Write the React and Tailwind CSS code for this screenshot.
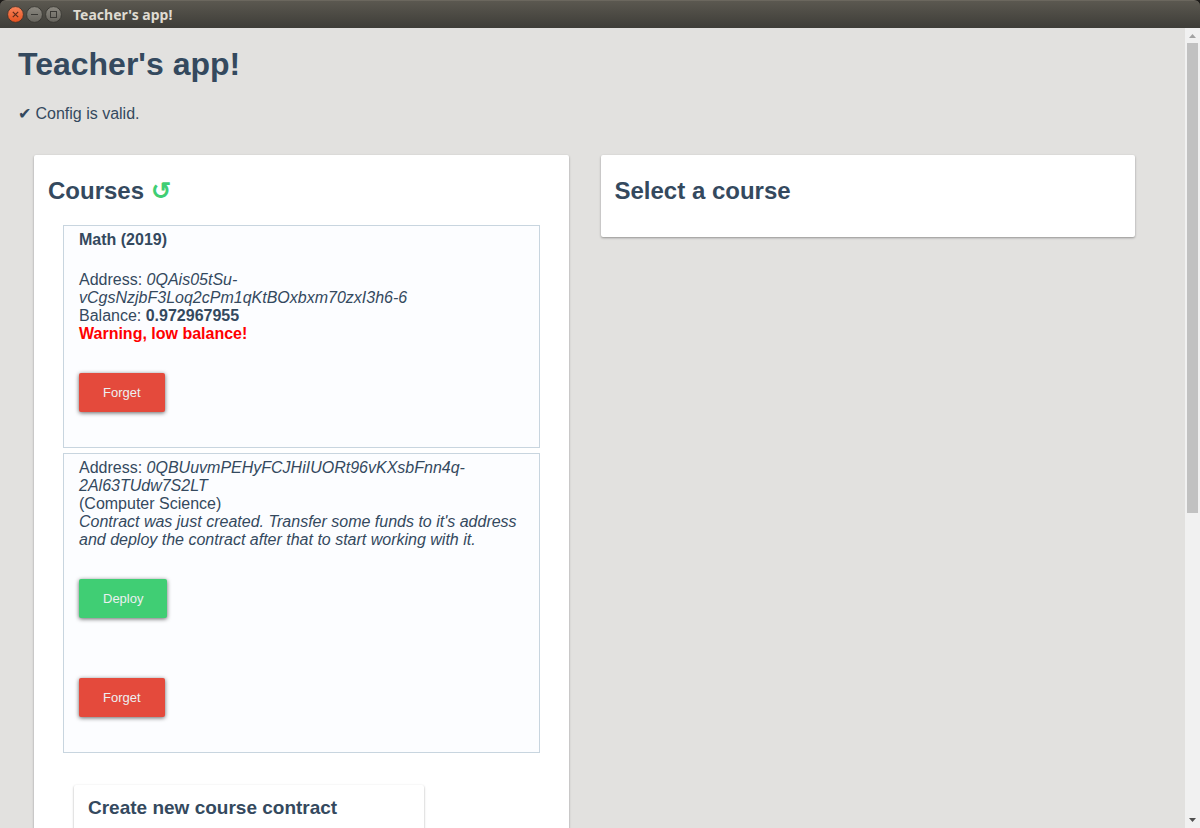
import React from "react";

function TitleBar() {
  return (
    <header className="flex h-7 shrink-0 items-center bg-[#1d1b19]">
      <div className="flex h-full flex-1 items-center rounded-t-md border-t border-[#6b675e] bg-linear-to-b from-[#5b5850] to-[#3e3d38] pl-[7px]">
        <div className="flex gap-[2px]">
          <button type="button" aria-label="Close" className="size-[17px]">
            <svg viewBox="0 0 17 17" className="size-[17px]">
              <defs>
                <linearGradient id="close" x1="0" y1="0" x2="0" y2="1">
                  <stop offset="0" stopColor="#f9855b" />
                  <stop offset="1" stopColor="#e4511f" />
                </linearGradient>
              </defs>
              <circle cx="8.5" cy="8.5" r="7.9" fill="url(#close)" stroke="#3a302a" strokeWidth="0.8" />
              <path d="M5.8 5.8l5.4 5.4M11.2 5.8l-5.4 5.4" stroke="#5c2c1b" strokeWidth="1.2" />
            </svg>
          </button>
          <button type="button" aria-label="Minimize" className="size-[17px]">
            <svg viewBox="0 0 17 17" className="size-[17px]">
              <defs>
                <linearGradient id="grey" x1="0" y1="0" x2="0" y2="1">
                  <stop offset="0" stopColor="#8c8981" />
                  <stop offset="1" stopColor="#66645d" />
                </linearGradient>
              </defs>
              <circle cx="8.5" cy="8.5" r="7.9" fill="url(#grey)" stroke="#33322d" strokeWidth="0.8" />
              <path d="M5 8.5h7" stroke="#3a3935" />
            </svg>
          </button>
          <button type="button" aria-label="Maximize" className="size-[17px]">
            <svg viewBox="0 0 17 17" className="size-[17px]">
              <circle cx="8.5" cy="8.5" r="7.9" fill="url(#grey)" stroke="#33322d" strokeWidth="0.8" />
              <rect x="5.5" y="5.5" width="6" height="6" fill="none" stroke="#3a3935" />
            </svg>
          </button>
        </div>
        <span className="ml-[11px] font-['Noto_Sans',sans-serif] text-[14px] leading-5 font-bold text-[#dfdbd2]">
          Teacher's app!
        </span>
      </div>
    </header>
  );
}

function ScrollBar() {
  return (
    <div aria-hidden="true" className="flex w-[15px] shrink-0 flex-col items-center bg-[#f1f1f1]">
      <svg viewBox="0 0 15 15" className="h-[15px] w-[15px] shrink-0">
        <path d="M4 10h7L7.5 6z" fill="#a3a3a3" />
      </svg>
      <div className="flex w-full flex-1 flex-col px-[2px]">
        <div className="h-[61%] bg-[#c1c1c1]" />
      </div>
      <svg viewBox="0 0 15 15" className="h-[15px] w-[15px] shrink-0">
        <path d="M4 5h7L7.5 9z" fill="#505050" />
      </svg>
    </div>
  );
}

const tones = {
  red: "bg-[#e44a3c]",
  green: "bg-[#40ce74]",
};

function ActionButton({ tone, children }) {
  return (
    <button
      type="button"
      className={`block rounded-[2px] px-6 py-3 text-[13px] leading-[15px] text-[#ecf0f1] shadow-[0_1px_4px_rgba(0,0,0,0.6)] ${tones[tone]}`}
    >
      {children}
    </button>
  );
}

function Card({ title, children }) {
  return (
    <section className="rounded-[2px] bg-white px-[14px] pt-[22px] pb-8 shadow-[0_1px_3px_rgba(0,0,0,0.12),0_1px_2px_rgba(0,0,0,0.24)]">
      <h2 className="text-2xl leading-7 font-bold">{title}</h2>
      {children}
    </section>
  );
}

function CourseBox({ children }) {
  return (
    <li className="border border-[#c8d5df] bg-[#fcfdff] px-[15px] pt-[5px] pb-[35px]">{children}</li>
  );
}

export default function App() {
  return (
    <div className="flex h-screen flex-col overflow-hidden bg-[#e2e1df] font-['Liberation_Sans',Arial,sans-serif] text-base leading-[18px] text-[#34495e]">
      <TitleBar />
      <div className="flex min-h-0 flex-1">
        <main className="min-w-0 flex-1 overflow-hidden pt-[18px]">
          <h1 className="px-[18px] text-[32px] leading-9 font-bold">Teacher's app!</h1>
          <p className="mt-[23px] px-[18px]">✔ Config is valid.</p>
          <div className="mt-8 grid grid-cols-2 items-start gap-8 pr-[50px] pl-[34px]">
            <Card
              title={
                <>
                  Courses{" "}
                  <button type="button" aria-label="Refresh courses" className="text-[#40ce74]">
                    ↺
                  </button>
                </>
              }
            >
              <ul className="mx-[15px] mt-5 flex flex-col gap-[5px]">
                <CourseBox>
                  <h3 className="font-bold">Math (2019)</h3>
                  <p className="mt-[22px]">
                    Address: <i>0QAis05tSu-vCgsNzjbF3Loq2cPm1qKtBOxbxm70zxI3h6-6</i>
                  </p>
                  <p>
                    Balance: <b>0.972967955</b>
                  </p>
                  <p className="font-bold text-[#ff0000]">Warning, low balance!</p>
                  <div className="mt-[30px]">
                    <ActionButton tone="red">Forget</ActionButton>
                  </div>
                </CourseBox>
                <CourseBox>
                  <p>
                    Address: <i>0QBUuvmPEHyFCJHiIUORt96vKXsbFnn4q-2Al63TUdw7S2LT</i>
                  </p>
                  <p>(Computer Science)</p>
                  <p className="italic">
                    Contract was just created. Transfer some funds to it's address and deploy the
                    contract after that to start working with it.
                  </p>
                  <div className="mt-[30px] flex flex-col items-start gap-[60px]">
                    <ActionButton tone="green">Deploy</ActionButton>
                    <ActionButton tone="red">Forget</ActionButton>
                  </div>
                </CourseBox>
              </ul>
              <section className="mt-8 ml-[26px] min-h-40 max-w-[350px] rounded-[2px] bg-white px-[14px] pt-3 shadow-[0_1px_3px_rgba(0,0,0,0.12),0_1px_2px_rgba(0,0,0,0.24)]">
                <h3 className="text-[19px] leading-[22px] font-bold">Create new course contract</h3>
              </section>
            </Card>
            <Card title="Select a course" />
          </div>
        </main>
        <ScrollBar />
      </div>
    </div>
  );
}
